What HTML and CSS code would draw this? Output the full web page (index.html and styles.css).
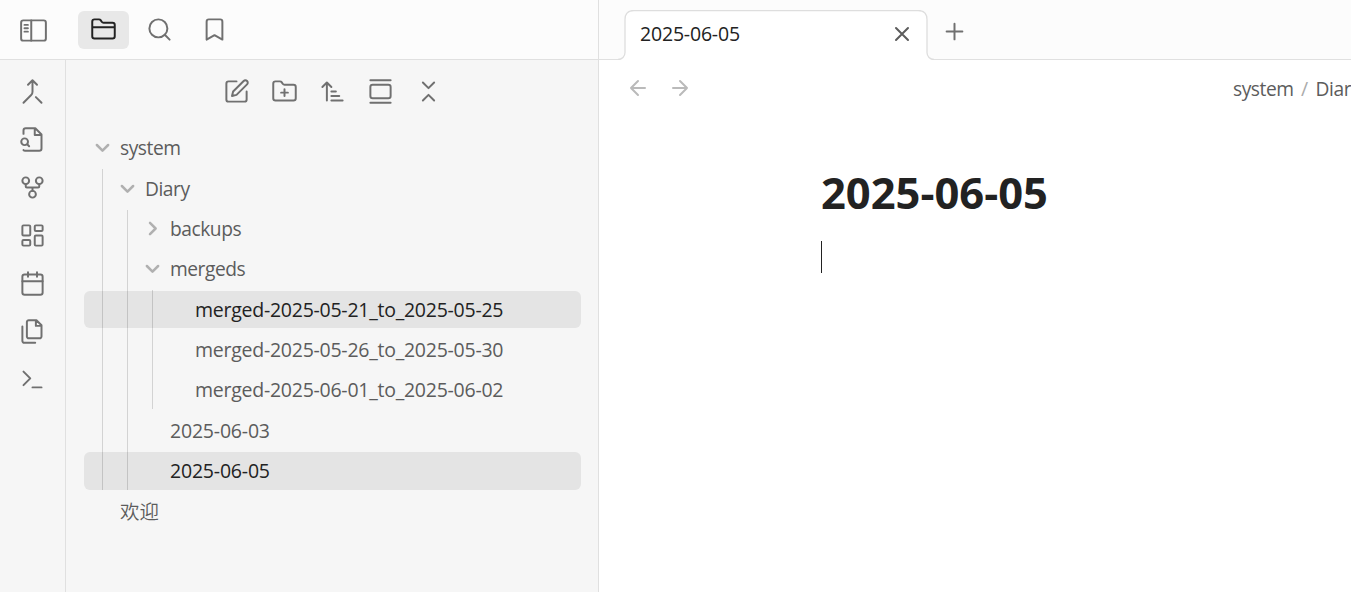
FILE: index.html
```
<!DOCTYPE html>
<html lang="zh">
<head>
<meta charset="utf-8">
<title>2025-06-05</title>
<link rel="stylesheet" href="styles.css">
</head>
<body>
<div class="app">
  <div class="left">
    <header class="side-header">
      <span class="toggle"><svg class="icon" viewBox="0 0 24 24"><rect x="1" y="3" width="22" height="18" rx="2"/><path d="M10 3v18M4 7h3M4 10h3M4 13h3"/></svg></span>
      <span class="side-tab active"><svg class="icon" viewBox="0 0 24 24"><path d="M20 20a2 2 0 0 0 2-2V8a2 2 0 0 0-2-2h-7.900a2 2 0 0 1-1.690-.9L9.600 3.900A2 2 0 0 0 7.930 3H4a2 2 0 0 0-2 2v13a2 2 0 0 0 2 2ZM2 10h20"/></svg></span>
      <span class="side-tab second"><svg class="icon up" viewBox="0 0 24 24"><circle cx="11" cy="11" r="8"/><path d="m21 21-4.300-4.300"/></svg></span>
      <span class="side-tab"><svg class="icon" viewBox="0 0 24 24"><path d="m19 21-7-4-7 4V5a2 2 0 0 1 2-2h10a2 2 0 0 1 2 2v16z"/></svg></span>
    </header>
    <div class="side-body">
      <nav class="ribbon">
        <svg class="icon" viewBox="0 0 24 24"><path d="m8 6 4-4 4 4M12 2v10.300a4 4 0 0 1-1.172 2.872L4 22M20 22l-5-5"/></svg>
        <svg class="icon" viewBox="0 0 24 24"><path d="M4 21.400c.3.400.8.600 1.400.600H18a2 2 0 0 0 2-2V7.500L14.500 2H6a2 2 0 0 0-2 2v3M14 2v6h6M9 18l-1.500-1.500"/><circle cx="5" cy="14" r="3"/></svg>
        <svg class="icon" viewBox="0 0 24 24"><circle cx="12" cy="18" r="3"/><circle cx="6" cy="6" r="3"/><circle cx="18" cy="6" r="3"/><path d="M18 9v2c0 .6-.4 1-1 1H7c-.6 0-1-.4-1-1V9M12 12v3"/></svg>
        <svg class="icon" viewBox="0 0 24 24"><rect x="3" y="3" width="7" height="9" rx="1"/><rect x="14" y="3" width="7" height="5" rx="1"/><rect x="14" y="12" width="7" height="9" rx="1"/><rect x="3" y="16" width="7" height="5" rx="1"/></svg>
        <svg class="icon" viewBox="0 0 24 24"><rect x="3" y="4" width="18" height="18" rx="2"/><path d="M16 2v4M8 2v4M3 10h18"/></svg>
        <svg class="icon" viewBox="0 0 24 24"><path d="M15.500 2H8.600c-.4 0-.8.2-1.100.5-.3.3-.5.7-.5 1.100v12.800c0 .4.2.8.5 1.100.3.3.7.5 1.100.5h9.800c.4 0 .8-.2 1.100-.5.3-.3.5-.7.5-1.100V6.500L15.500 2zM3 7.600v12.800c0 .4.2.8.5 1.100.3.3.7.5 1.100.5h9.800M15 2v5h5"/></svg>
        <svg class="icon" viewBox="0 0 24 24"><path d="m4 17 6-6-6-6M12 19h8"/></svg>
      </nav>
      <section class="explorer">
        <div class="actions">
          <svg class="icon" viewBox="0 0 24 24"><path d="M12 3H5a2 2 0 0 0-2 2v14a2 2 0 0 0 2 2h14a2 2 0 0 0 2-2v-7M18.375 2.625a2.121 2.121 0 1 1 3 3L12 15l-4 1 1-4Z"/></svg>
          <svg class="icon" viewBox="0 0 24 24"><path d="M12 10v6M9 13h6M20 20a2 2 0 0 0 2-2V8a2 2 0 0 0-2-2h-7.900a2 2 0 0 1-1.690-.9L9.600 3.900A2 2 0 0 0 7.930 3H4a2 2 0 0 0-2 2v13a2 2 0 0 0 2 2Z"/></svg>
          <svg class="icon" viewBox="0 0 24 24"><path d="m3 8 4-4 4 4M7 4v16M11 12h4M11 16h7M11 20h10"/></svg>
          <svg class="icon" viewBox="0 0 24 24"><path d="M3 2h18M3 22h18"/><rect x="3" y="6" width="18" height="12" rx="2"/></svg>
          <svg class="icon" viewBox="0 0 24 24"><path d="m7 20 5-5 5 5M7 4l5 5 5-5"/></svg>
        </div>
        <div class="tree">
          <div class="row d0"><svg class="chev" viewBox="0 0 24 24"><path d="M3 8l9 9 9-9"/></svg><span class="word">system</span></div>
          <div class="children g0">
            <div class="row d1"><svg class="chev" viewBox="0 0 24 24"><path d="M3 8l9 9 9-9"/></svg><span class="word">Diary</span></div>
            <div class="children g1">
              <div class="row d2"><svg class="chev closed" viewBox="0 0 24 24"><path d="M3 8l9 9 9-9"/></svg><span class="word">backups</span></div>
              <div class="row d2"><svg class="chev" viewBox="0 0 24 24"><path d="M3 8l9 9 9-9"/></svg><span class="word">mergeds</span></div>
              <div class="children g2">
                <div class="row d3 selected"><span class="merged">merged-2025-05-21_to_2025-05-25</span></div>
                <div class="row d3"><span class="merged">merged-2025-05-26_to_2025-05-30</span></div>
                <div class="row d3"><span class="merged">merged-2025-06-01_to_2025-06-02</span></div>
              </div>
              <div class="row d2"><span class="date">2025-06-03</span></div>
              <div class="row d2 selected"><span class="date">2025-06-05</span></div>
            </div>
          </div>
          <div class="row d0"><span class="cjk">欢迎</span></div>
        </div>
      </section>
    </div>
  </div>
  <main class="main">
    <header class="tabs">
      <div class="tab">
        <svg class="tab-shape" viewBox="0 0 316 50"><path class="fill" d="M0 50c4 0 7-3 7-7V9.500Q7 .5 16 .5H300Q309 .5 309 9.500V43c0 4 3 7 7 7z"/><path class="edge" d="M0 49.500c4 0 7-3 7-7V9.500Q7 .5 16 .5H300Q309 .5 309 9.500V42.500c0 4 3 7 7 7"/></svg>
        <span class="tab-title date">2025-06-05</span>
        <svg class="icon close" viewBox="0 0 24 24"><path d="M18 6 6 18M6 6l12 12"/></svg>
      </div>
      <svg class="icon plus" viewBox="0 0 24 24"><path d="M5 12h14M12 5v14"/></svg>
    </header>
    <div class="view-header">
      <svg class="icon nav" viewBox="0 0 24 24"><path d="m12 19-7-7 7-7M19 12H5"/></svg>
      <svg class="icon nav" viewBox="0 0 24 24"><path d="M5 12h14M12 5l7 7-7 7"/></svg>
      <div class="crumbs"><span class="word">system</span><span class="slash">/</span><span class="word">Diar</span></div>
    </div>
    <article class="note">
      <h1>2025-06-05</h1>
      <div class="caret"></div>
    </article>
  </main>
</div>
</body>
</html>
```
FILE: styles.css
```
* { box-sizing: border-box; }
body {
  margin: 0;
  overflow: hidden;
  font: 19.5px/25.35px "Open Sans", "Noto Sans", "Noto Sans CJK SC", sans-serif;
  color: #5c5c5c;
}
.app { display: flex; width: 1351px; height: 592px; background: #fff; }
.icon {
  display: block;
  flex: none;
  width: 27px;
  height: 27px;
  fill: none;
  stroke: #707070;
  stroke-width: 1.75;
  stroke-linecap: round;
  stroke-linejoin: round;
}

/* left side */
.left { display: flex; flex-direction: column; width: 599px; flex: none; border-right: 1px solid #e0e0e0; }
.side-header {
  display: flex;
  align-items: flex-start;
  gap: 4px;
  height: 60px;
  padding: 11px 0 0 20px;
  background: #fcfcfc;
  border-bottom: 1px solid #e0e0e0;
}
.toggle { width: 54px; padding-top: 6px; }
.side-tab { display: flex; align-items: center; justify-content: center; width: 51px; height: 38px; border-radius: 6px; }
.side-tab .icon { margin-bottom: 1px; }
.side-tab .up { margin-bottom: 2px; }
.second { margin-left: 1px; }
.active { background: #e8e8e8; }
.active .icon { stroke: #222; }
.side-body { display: flex; flex: 1; background: #f6f6f6; }
.ribbon {
  display: flex;
  flex-direction: column;
  align-items: center;
  gap: 21px;
  width: 66px;
  padding-top: 18px;
  border-right: 1px solid #e0e0e0;
}
.explorer { flex: 1; padding-top: 18px; }
.actions { display: flex; gap: 21px; padding-left: 157px; height: 51.500px; }

/* file tree */
.tree { margin: 0 17px 0 18.400px; }
.row {
  position: relative;
  display: flex;
  align-items: center;
  height: 37.350px;
  margin-bottom: 3px;
  border-radius: 6px;
  white-space: nowrap;
}
.row > span { padding-bottom: .6px; }
.d0 { padding-left: 35.600px; }
.d1 { padding-left: 60.600px; }
.d2 { padding-left: 85.600px; }
.d3 { padding-left: 110.600px; }
.selected { background: #e4e4e4; color: #222; }
.chev {
  width: 15px;
  height: 15px;
  margin: 0 10px 1px -25px;
  fill: none;
  stroke: #b0b0b0;
  stroke-width: 4;
  stroke-linecap: round;
  stroke-linejoin: round;
}
.closed { transform: rotate(-90deg); }
.children { position: relative; }
.children::before {
  content: "";
  position: absolute;
  z-index: 1;
  top: -.5px;
  bottom: 0;
  width: 1px;
  background: rgba(0, 0, 0, .14);
}
.g0::before { left: 17.600px; }
.g1::before { left: 42.600px; }
.g2::before { left: 67.600px; }
.word { font-size: 19.2px; letter-spacing: -.45px; }
.date { letter-spacing: -.19px; }
.merged { letter-spacing: -.25px; }
.cjk { font-family: "Noto Sans CJK SC", sans-serif; font-weight: 350; }
.row > .cjk { padding-bottom: 2px; }

/* editor */
.main { flex: 1; min-width: 0; overflow: hidden; }
.tabs {
  display: flex;
  height: 60px;
  padding: 10px 0 0 19px;
  background: #fcfcfc;
  border-bottom: 1px solid #e0e0e0;
}
.tab { position: relative; display: flex; width: 316px; height: 50px; padding: 11px 20px 0 22px; justify-content: space-between; color: #222; }
.tab-shape { position: absolute; left: 0; top: 0; width: 316px; height: 50px; }
.fill { fill: #fff; }
.edge { fill: none; stroke: #dedede; stroke-width: 1.300; }
.tab-title { position: relative; }
.close { position: relative; width: 24px; height: 24px; margin-top: 1px; stroke: #5c5c5c; stroke-width: 2; }
.plus { margin: 8px 0 0 7px; }
.view-header { display: flex; gap: 18px; height: 57px; padding: 16px 0 0 27px; }
.nav { width: 24px; height: 24px; stroke: #bababa; stroke-width: 2; }
.crumbs { display: flex; margin-left: 523px; white-space: nowrap; }
.slash { width: 22px; text-align: center; color: #ababab; }
.note { padding: 49px 0 0 222px; }
h1 { margin: 0; font-size: 43.500px; line-height: 54px; color: #222; }
.caret { width: 1px; height: 32px; margin-top: 21px; background: #222; }
```
